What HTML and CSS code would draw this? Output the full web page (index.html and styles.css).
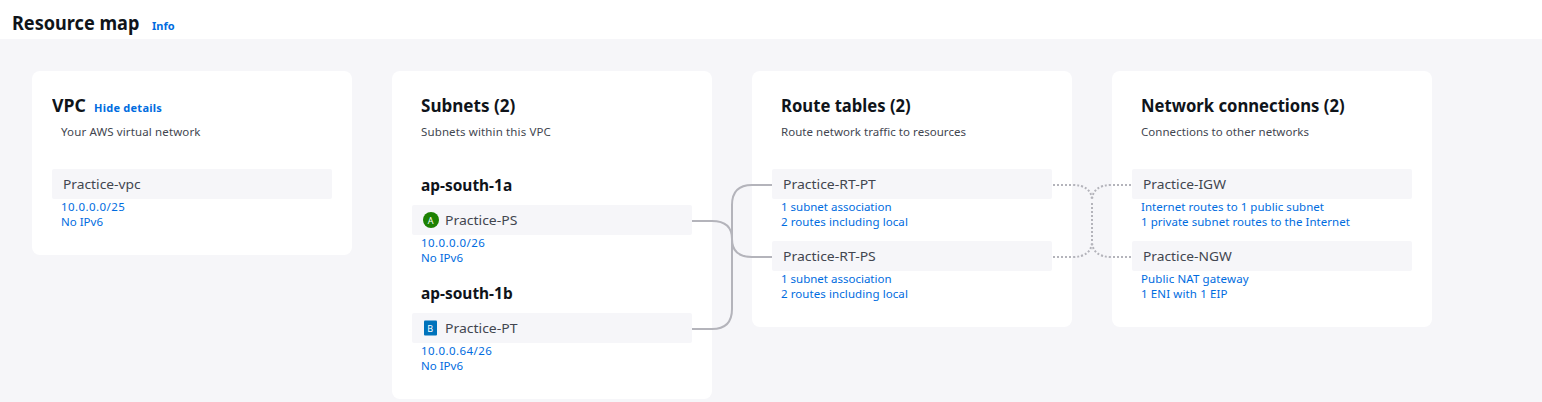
FILE: index.html
```html
<!DOCTYPE html>
<html lang="en">
<head>
<meta charset="utf-8">
<title>Resource map</title>
<link rel="stylesheet" href="styles.css">
</head>
<body>
<header class="page-header"><h1 class="page-title">Resource map</h1><a class="info">Info</a></header>
<main class="map">
  <section class="card">
    <div class="card-head card-head-vpc"><h2 class="card-title t-vpc">VPC</h2><a class="details">Hide details</a></div>
    <p class="desc d-vpc">Your AWS virtual network</p>
    <div class="item"><div class="row"><span class="name n-vpc">Practice-vpc</span></div><a class="link l-cidr">10.0.0.0/25</a><a class="link l-ip">No IPv6</a></div>
  </section>
  <section class="card">
    <div class="card-head"><h2 class="card-title t-sub">Subnets (2)</h2></div>
    <p class="desc d-sub">Subnets within this VPC</p>
    <h3 class="zone"><span class="zone-name">ap-south-1a</span></h3>
    <div class="item"><div class="row"><svg class="badge" width="18" height="18" viewBox="0 0 18 18"><circle cx="9" cy="9" r="8" fill="#1d8102"/><text class="badge-letter" x="8.6" y="12.8">A</text></svg><span class="name n-ps">Practice-PS</span></div><a class="link l-cidr">10.0.0.0/26</a><a class="link l-ip">No IPv6</a></div>
    <h3 class="zone"><span class="zone-name">ap-south-1b</span></h3>
    <div class="item"><div class="row"><svg class="badge" width="18" height="18" viewBox="0 0 18 18"><rect x="2" y="1.5" width="13" height="15" rx="1" fill="#0073bb"/><text class="badge-letter" x="8.3" y="12.8">B</text></svg><span class="name n-pt">Practice-PT</span></div><a class="link l-cidr">10.0.0.64/26</a><a class="link l-ip">No IPv6</a></div>
  </section>
  <section class="card">
    <div class="card-head"><h2 class="card-title t-rt">Route tables (2)</h2></div>
    <p class="desc d-rt">Route network traffic to resources</p>
    <div class="item"><div class="row"><span class="name n-rt">Practice-RT-PT</span></div><a class="link l-assoc">1 subnet association</a><a class="link l-routes">2 routes including local</a></div>
    <div class="item"><div class="row"><span class="name n-rt">Practice-RT-PS</span></div><a class="link l-assoc">1 subnet association</a><a class="link l-routes">2 routes including local</a></div>
  </section>
  <section class="card">
    <div class="card-head"><h2 class="card-title t-net">Network connections (2)</h2></div>
    <p class="desc d-net">Connections to other networks</p>
    <div class="item"><div class="row"><span class="name n-igw">Practice-IGW</span></div><a class="link l-igw">Internet routes to 1 public subnet</a><a class="link l-priv">1 private subnet routes to the Internet</a></div>
    <div class="item"><div class="row"><span class="name n-ngw">Practice-NGW</span></div><a class="link l-nat">Public NAT gateway</a><a class="link l-eni">1 ENI with 1 EIP</a></div>
  </section>
  <svg class="wires" width="1542" height="363" viewBox="0 39 1542 363">
    <path class="wire" d="M692 221H712Q732 221 732 239Q732 257 752 257H772"/>
    <path class="wire" d="M692 329H712Q732 329 732 309V205Q732 185 752 185H772"/>
    <path class="wire dotted" d="M1053 185H1072Q1092 185 1092 201"/>
    <path class="wire dotted" d="M1131 185H1112Q1092 185 1092 201"/>
    <path class="wire dotted" d="M1092 203V241"/>
    <path class="wire dotted" d="M1053 257H1072Q1092 257 1092 241"/>
    <path class="wire dotted" d="M1131 257H1112Q1092 257 1092 241"/>
  </svg>
</main>
</body>
</html>
```
FILE: styles.css
```css
* { box-sizing: border-box; }
body { margin: 0; height: 402px; overflow: hidden; background: #fff; color: #0f141a; font-family: "Noto Sans", "Open Sans", sans-serif; }
h1, h2, h3, p { margin: 0; }
a { color: #006ce0; text-decoration: none; }
.page-header { height: 39px; padding: 9px 12px 0; display: flex; align-items: baseline; gap: 12px; }
.page-title { width: 128px; font-size: 20px; line-height: 27px; font-weight: 700; transform: scaleX(0.905); transform-origin: 0 50%; white-space: nowrap; }
.info, .details { font-size: 11px; font-weight: 700; line-height: 15px; white-space: nowrap; }
.details { letter-spacing: 0.25px; }
.map { position: relative; height: 363px; padding: 32px 32px 0; background: #f6f6f9; display: flex; align-items: flex-start; gap: 40px; }
.card { width: 320px; flex: none; padding: 20px 20px 14px; border-radius: 8px; background: #fff; }
.card-head { height: 31px; padding-left: 9px; display: flex; align-items: baseline; gap: 8px; }
.card-head-vpc { padding-left: 0; }
.card-title { font-size: 18px; line-height: 29px; font-weight: 700; transform: scaleX(0.925); transform-origin: 0 50%; white-space: nowrap; }
.t-vpc { width: 34px; transform: scaleX(0.98); }
.t-sub { transform: scaleX(0.948); }
.desc { height: 47px; padding-left: 9px; font-size: 11.5px; line-height: 20px; color: #424650; white-space: nowrap; }
.d-vpc, .d-sub { letter-spacing: 0.13px; }
.d-rt, .d-net { letter-spacing: 0.04px; }
.zone { height: 36px; padding-left: 9px; font-size: 16px; line-height: 32px; font-weight: 700; }
.zone-name { display: inline-block; transform: scaleX(0.965); transform-origin: 0 50%; }
.item { margin-bottom: 12px; }
.row { height: 30px; padding-left: 11px; display: flex; align-items: center; background: #f6f6f9; border-radius: 2px; font-size: 13px; line-height: 20px; color: #424650; }
.name { transform: scaleX(1.06); transform-origin: 0 50%; white-space: nowrap; }
.n-ps, .n-pt, .n-rt { transform: scaleX(1.075); }
.badge { flex: none; margin: 0 5px 0 -1px; }
.badge-letter { font: 9px "Noto Sans", sans-serif; fill: #fff; text-anchor: middle; }
.link { display: block; padding-left: 9px; font-size: 11.5px; line-height: 15px; white-space: nowrap; }
.l-cidr { letter-spacing: 0.42px; }
.l-routes { letter-spacing: 0.08px; }
.l-igw, .l-priv { letter-spacing: 0.04px; }
.l-nat, .l-eni { letter-spacing: 0.12px; }
.wires { position: absolute; left: 0; top: 0; pointer-events: none; }
.wire { fill: none; stroke: #b4b4bb; stroke-width: 2; }
.dotted { stroke-dasharray: 2 2; }
```
